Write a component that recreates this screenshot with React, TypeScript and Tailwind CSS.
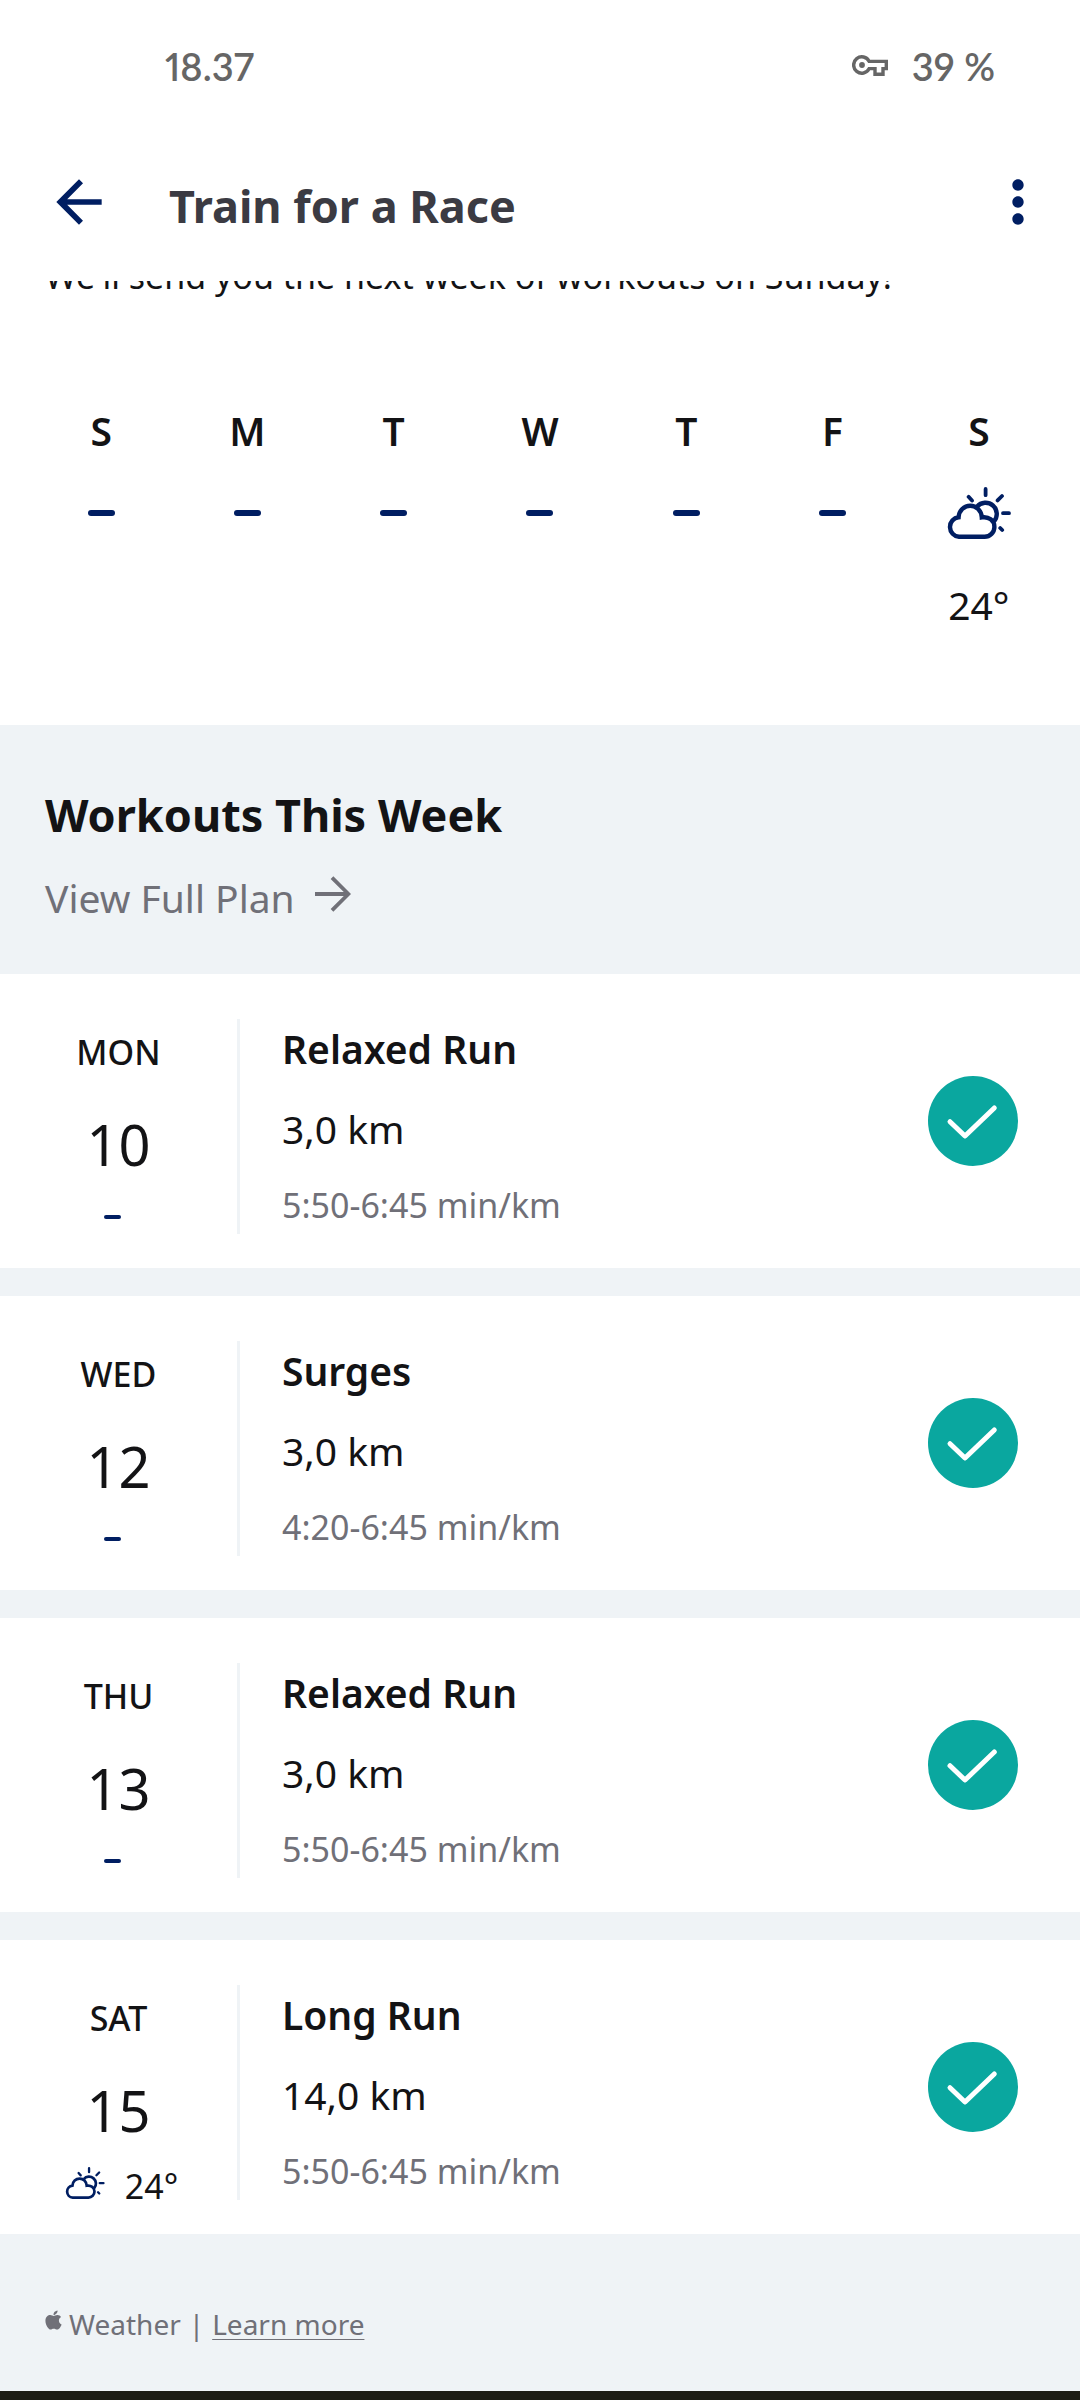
import { FaApple } from 'react-icons/fa';
import { MdArrowBack, MdMoreVert } from 'react-icons/md';

interface DayForecast {
  letter: string;
  name: string;
  temp?: string;
}

interface Workout {
  day: string;
  date: number;
  title: string;
  distance: string;
  pace: string;
  temp?: string;
}

const WEEK: DayForecast[] = [
  { letter: 'S', name: 'sunday' },
  { letter: 'M', name: 'monday' },
  { letter: 'T', name: 'tuesday' },
  { letter: 'W', name: 'wednesday' },
  { letter: 'T', name: 'thursday' },
  { letter: 'F', name: 'friday' },
  { letter: 'S', name: 'saturday', temp: '24°' },
];

const WORKOUTS: Workout[] = [
  { day: 'MON', date: 10, title: 'Relaxed Run', distance: '3,0 km', pace: '5:50-6:45 min/km' },
  { day: 'WED', date: 12, title: 'Surges', distance: '3,0 km', pace: '4:20-6:45 min/km' },
  { day: 'THU', date: 13, title: 'Relaxed Run', distance: '3,0 km', pace: '5:50-6:45 min/km' },
  { day: 'SAT', date: 15, title: 'Long Run', distance: '14,0 km', pace: '5:50-6:45 min/km', temp: '24°' },
];

function KeyIcon() {
  return (
    <svg viewBox="0 0 36 22" className="h-[22px] w-9" role="img" aria-label="VPN on">
      <path
        d="M17.2 6.4H34.3V13.6H31V19.3H23V13.6H17.2A8.2 8.2 0 1 1 17.2 6.4Z"
        fill="none"
        stroke="currentColor"
        strokeWidth="3.4"
      />
      <circle cx="10" cy="10" r="2.9" fill="currentColor" />
    </svg>
  );
}

function PartlyCloudyIcon({ className }: { className: string }) {
  return (
    <svg viewBox="0 0 64 52" fill="none" stroke="currentColor" strokeWidth="4.4" className={className} aria-hidden="true">
      <path d="M12 49.7A9.8 9.8 0 0 1 11.6 30.2C12 23.6 17 18.8 23.2 18.8S34.4 23.6 34.8 30.4C41.8 29.2 47.4 33.6 47.4 39.9A9.8 9.8 0 0 1 37.6 49.7Z" />
      <path d="M30 19.6A11.2 11.2 0 0 1 47 34.4" />
      <path
        strokeWidth="3.8"
        strokeLinecap="round"
        d="M38.6 2V8.2M21.6 9.8L25 13.6M50.6 13.4L55 9M56 26.2H62M53.2 41L55.2 43"
      />
    </svg>
  );
}

function CheckBadge() {
  return (
    <svg viewBox="0 0 90 90" className="size-[90px] shrink-0" role="img" aria-label="Completed">
      <circle cx="45" cy="45" r="45" fill="#0aa79f" />
      <path
        d="M22 45.7L37 60L66.3 32"
        fill="none"
        stroke="#fff"
        strokeWidth="5"
        strokeLinecap="round"
        strokeLinejoin="round"
      />
    </svg>
  );
}

function WorkoutCard({ workout }: { workout: Workout }) {
  return (
    <li className="flex items-center bg-white pr-[62px]">
      <div className="mt-[45px] mb-[34px] flex h-[215px] w-[240px] shrink-0 flex-col items-center border-r-[3px] border-[#eff3f6] pt-[9px]">
        <span className="text-[34px] leading-[48px] font-medium">{workout.day}</span>
        <span className="mt-8 text-[56px] leading-[72px]">{workout.date}</span>
        {workout.temp ? (
          <div className="mt-[21px] flex items-start gap-5 pl-1.5">
            <PartlyCloudyIcon className="h-8 w-10 text-[#001e62]" />
            <span className="text-[34px] leading-[38px]">{workout.temp}</span>
          </div>
        ) : (
          <span className="mt-[35px] mr-3 h-1 w-[17px] rounded-full bg-[#001e62]" />
        )}
      </div>
      <div className="mt-[45px] mb-[34px] flex-1 pl-[42px]">
        <h3 className="text-[39px] leading-[56px] font-semibold">{workout.title}</h3>
        <p className="mt-6 text-[39px] leading-[56px]">{workout.distance}</p>
        <p className="mt-5 text-[34px] leading-[56px] text-[#707078]">{workout.pace}</p>
      </div>
      <CheckBadge />
    </li>
  );
}

export default function App() {
  return (
    <div className="flex min-h-screen flex-col bg-white font-['Noto_Sans',sans-serif] text-[#131315]">
      <div className="flex h-[134px] items-center justify-between pr-[85px] pb-0.5 pl-[165px] font-['Lato',sans-serif] text-[38px] leading-[48px] font-semibold text-[#666666] proportional-nums">
        <span>18.37</span>
        <div className="flex items-center gap-6">
          <KeyIcon />
          <span>39 %</span>
        </div>
      </div>

      <header className="flex h-[147px] shrink-0 items-start pt-[34px] pr-7 pl-[45px]">
        <button type="button" aria-label="Back" className="text-[#001e62]">
          <MdArrowBack className="size-[68px]" />
        </button>
        <h1 className="flex-1 pt-2 pl-[56px] text-[45px] leading-[60px] font-bold text-[#3b3b43]">Train for a Race</h1>
        <button type="button" aria-label="More options" className="text-[#001e62]">
          <MdMoreVert className="size-[68px]" />
        </button>
      </header>

      <main className="flex flex-1 flex-col overflow-hidden bg-[#eff3f6]">
        <section className="bg-white pb-[92px]">
          {/* scrolled partly under the header */}
          <p className="-mt-[29px] px-[45px] text-[34px] leading-[48px]">
            We'll send you the next week of workouts on Sunday!
          </p>
          <ul className="mt-[103px] grid grid-cols-7 px-7">
            {WEEK.map((day) => (
              <li key={day.name} className="flex flex-col items-center">
                <span className="text-[39px] leading-[56px] font-semibold">{day.letter}</span>
                <span className="mt-[22px] flex h-[64px] items-center text-[#001e62]">
                  {day.temp ? (
                    <PartlyCloudyIcon className="h-[52px] w-16" />
                  ) : (
                    <span className="h-1.5 w-[27px] rounded-full bg-[#001e62]" />
                  )}
                </span>
                {day.temp && <span className="mt-8 text-[39px] leading-[56px]">{day.temp}</span>}
              </li>
            ))}
          </ul>
        </section>

        <section>
          <div className="px-[45px] pt-[60px] pb-12">
            <h2 className="text-[45px] leading-[60px] font-bold">Workouts This Week</h2>
            <a href="#plan" className="mt-[25px] flex items-center gap-5 text-[39px] leading-[56px] text-[#707078]">
              View Full Plan
              <svg viewBox="0 0 36 44" fill="none" stroke="currentColor" strokeWidth="3.8" className="h-11 w-9">
                <path d="M0 18H33M17 1.6L33.4 18L17 34.4" />
              </svg>
            </a>
          </div>
          <ul className="flex flex-col gap-7">
            {WORKOUTS.map((workout) => (
              <WorkoutCard key={workout.date} workout={workout} />
            ))}
          </ul>
        </section>

        <footer className="flex items-center px-[45px] pt-[70px] text-[28px] leading-[40px] text-[#707078]">
          <FaApple className="mr-[7px] mb-2 h-[22px] w-[17px]" />
          <span className="mr-2">Weather</span>
          <span className="mr-2">|</span>
          <a href="#weather" className="underline decoration-1 underline-offset-4">
            Learn more
          </a>
        </footer>
      </main>
      <div className="h-[9px] shrink-0 bg-[#1c1c14]" />
    </div>
  );
}
